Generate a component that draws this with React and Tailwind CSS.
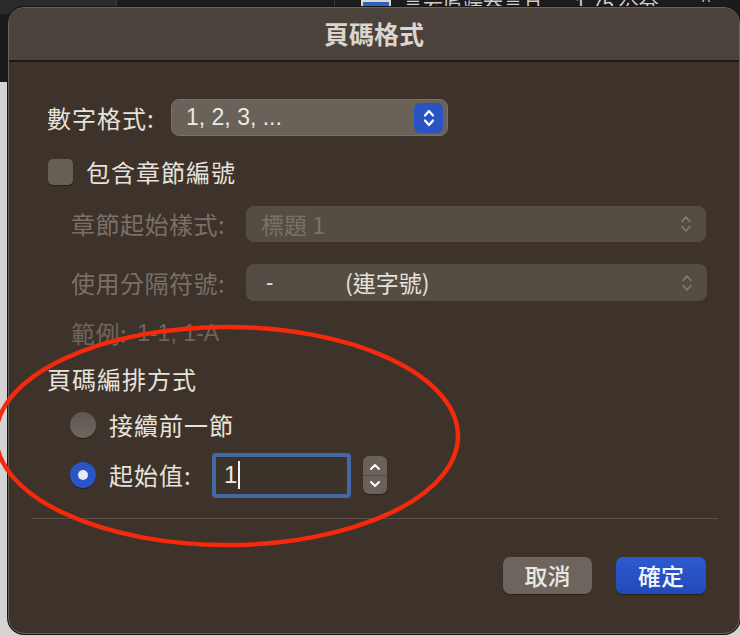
import React from "react";

const cjk = "font-['Noto_Sans_CJK_TC','Noto_Sans_CJK_SC',sans-serif]";

function UpDown({ className = "", color = "#fff", w = 12, h = 20, sw = 2 }) {
    return (
        <svg width={w} height={h} viewBox="0 0 12 20" className={className} fill="none">
            <path d="M2 7.5 L6 3 L10 7.5" stroke={color} strokeWidth={sw} strokeLinecap="round" strokeLinejoin="round" />
            <path d="M2 12.5 L6 17 L10 12.5" stroke={color} strokeWidth={sw} strokeLinecap="round" strokeLinejoin="round" />
        </svg>
    );
}

function Backdrop() {
    return (
        <div className="h-[82px] bg-[#1b1b1b] flex relative">
            <div className="w-[117px] h-[14px] bg-[#2a2a2a] border-r border-[#3a3a3a]" />
            <div className="w-[218px] border-r border-[#3a3a3a]" />
            <div className="flex items-start gap-[12px] pl-[26px] -mt-[8px]">
                <div className="w-[30px] h-[14px] mt-[8px] bg-[#2d63b8] border-2 border-[#d8d8d8]" />
                <span className={`${cjk} text-[20px] text-[#cfcfcf] leading-none mt-[2px]`}>言云庐端吞言且</span>
                <span className="font-['Liberation_Sans',sans-serif] text-[20px] text-[#cfcfcf] leading-none mt-[2px] ml-[20px]">1.75 公分</span>
                <span className="text-[16px] text-[#cfcfcf] leading-none ml-[30px]">^</span>
            </div>
        </div>
    );
}

function Popup({ children, disabled, className = "" }) {
    return (
        <div
            className={`flex items-center rounded-[8px] ${
                disabled ? "bg-[#554c44]" : "bg-[#6a6259] border border-[#7a726a]"
            } ${className}`}
        >
            {children}
        </div>
    );
}

function Radio({ checked }) {
    return checked ? (
        <div className="w-[26px] h-[26px] rounded-full bg-[#2b55c6] flex items-center justify-center shadow-[0_1px_1px_rgba(0,0,0,0.4)]">
            <div className="w-[10px] h-[10px] rounded-full bg-[#e6ebf7]" />
        </div>
    ) : (
        <div className="w-[26px] h-[26px] rounded-full bg-gradient-to-b from-[#5f5750] to-[#6e665e] shadow-[0_1px_1px_rgba(0,0,0,0.4)]" />
    );
}

export default function App() {
    return (
        <div className="relative w-[740px] h-[636px] overflow-hidden bg-[#d4d4d4]">
            <Backdrop />

            {/* Dialog window */}
            <div className={`absolute left-[8px] top-[7px] w-[732px] h-[627px] rounded-[16px] overflow-hidden border border-[#6a625b] shadow-[0_0_0_1px_#1a1612] bg-[#3d332a] flex flex-col ${cjk}`}>
                {/* Title bar */}
                <div className="h-[54px] shrink-0 bg-[#4a423b] border-b-2 border-[#1e1914] flex items-center justify-center">
                    <span className="text-[25px] font-bold text-[#dcd5ce] leading-none -mt-[1px]">頁碼格式</span>
                </div>

                <div className="flex flex-col pl-[38px] pr-[28px] text-[#e7e2dc]">
                    {/* Number format */}
                    <div className="h-[37px] mt-[37px] flex items-center">
                        <span className="text-[24px] leading-none w-[124px] tracking-[1px]">數字格式:</span>
                        <Popup className="w-[277px] h-[37px] pl-[14px] pr-[4px]">
                            <span className="font-['Liberation_Sans',sans-serif] text-[23px] leading-none text-[#ece8e3] flex-1">1, 2, 3, ...</span>
                            <div className="w-[29px] h-[30px] rounded-[6px] bg-[#2a54c4] flex items-center justify-center">
                                <UpDown w={12} h={20} sw={2.2} />
                            </div>
                        </Popup>
                    </div>

                    {/* Include chapter number */}
                    <div className="h-[26px] mt-[23px] flex items-center">
                        <div className="w-[25px] h-[26px] ml-[1px] rounded-[5px] bg-[#675e56] shadow-[0_1px_1px_rgba(0,0,0,0.4)]" />
                        <span className="text-[24px] leading-none ml-[13px] tracking-[1px]">包含章節編號</span>
                    </div>

                    {/* Chapter starts with style */}
                    <div className="h-[36px] mt-[21px] flex items-center">
                        <span className="text-[24px] leading-none text-[#7a7067] w-[199px] pl-[24px] tracking-[0.5px]">章節起始樣式:</span>
                        <Popup disabled className="w-[460px] h-[36px] pl-[15px] pr-[14px]">
                            <span className="text-[23px] leading-none text-[#7b7168] flex-1">標題 1</span>
                            <UpDown color="#857b72" w={12} h={20} sw={1.6} />
                        </Popup>
                    </div>

                    {/* Separator */}
                    <div className="h-[37px] mt-[22px] flex items-center">
                        <span className="text-[24px] leading-none text-[#7a7067] w-[199px] pl-[24px] tracking-[0.5px]">使用分隔符號:</span>
                        <Popup disabled className="w-[461px] h-[37px] pl-[20px] pr-[14px]">
                            <span className="font-['Liberation_Sans',sans-serif] text-[22px] leading-none text-[#e6e1db] w-[79px]">-</span>
                            <span className="text-[23px] leading-none text-[#e6e1db] flex-1">(連字號)</span>
                            <UpDown color="#857b72" w={12} h={20} sw={1.6} />
                        </Popup>
                    </div>

                    {/* Example */}
                    <div className="h-[30px] mt-[17px] flex items-center pl-[24px]">
                        <span className="text-[24px] leading-none text-[#6e655c] tracking-[0.5px]">範例:</span>
                        <span className="font-['Liberation_Sans',sans-serif] text-[23px] leading-none text-[#6e655c] ml-[10px]">1-1, 1-A</span>
                    </div>

                    {/* Page numbering */}
                    <div className="h-[30px] mt-[16px] flex items-center">
                        <span className="text-[24px] leading-none tracking-[1px]">頁碼編排方式</span>
                    </div>

                    <div className="h-[30px] mt-[16px] flex items-center pl-[23px]">
                        <Radio />
                        <span className="text-[24px] leading-none ml-[13px] tracking-[1px]">接續前一節</span>
                    </div>

                    <div className="h-[46px] mt-[12px] flex items-center pl-[23px]">
                        <Radio checked />
                        <span className="text-[24px] leading-none ml-[13px] w-[103px] tracking-[1px]">起始值:</span>
                        <div className="w-[139px] h-[45px] rounded-[4px] border-[4px] border-[#4467a6] bg-[#3b322a] flex items-center pl-[8px]">
                            <span className="font-['Liberation_Sans',sans-serif] text-[24px] leading-none text-[#ece8e3]">1</span>
                            <div className="w-[2px] h-[28px] bg-[#f2f2f2] ml-[1px]" />
                        </div>
                        <div className="ml-[12px] w-[24px] h-[38px] rounded-[6px] bg-[#6a6259] flex flex-col items-center justify-center shadow-[0_1px_1px_rgba(0,0,0,0.4)]">
                            <svg width="12" height="10" viewBox="0 0 12 10" fill="none">
                                <path d="M2 7 L6 3 L10 7" stroke="#fff" strokeWidth="2" strokeLinecap="round" strokeLinejoin="round" />
                            </svg>
                            <div className="w-[24px] h-[1px] bg-[#554d46] my-[3px]" />
                            <svg width="12" height="10" viewBox="0 0 12 10" fill="none">
                                <path d="M2 3 L6 7 L10 3" stroke="#fff" strokeWidth="2" strokeLinecap="round" strokeLinejoin="round" />
                            </svg>
                        </div>
                    </div>
                </div>

                {/* Divider */}
                <div className="h-[1px] bg-[#5a5048] mt-[20px] ml-[23px] mr-[21px]" />

                {/* Buttons */}
                <div className="flex justify-end gap-[24px] mt-[38px] pr-[33px]">
                    <button className="w-[89px] h-[37px] rounded-[7px] bg-[#6d655d] text-[23px] font-medium text-[#ebe7e2] leading-none shadow-[0_1px_1px_rgba(0,0,0,0.4)]">
                        取消
                    </button>
                    <button className="w-[90px] h-[37px] rounded-[7px] bg-gradient-to-b from-[#2c5ad0] to-[#2349b8] text-[23px] font-medium text-[#f3f5fb] leading-none shadow-[0_1px_1px_rgba(0,0,0,0.4)]">
                        確定
                    </button>
                </div>
            </div>

            {/* Red annotation ellipse */}
            <svg className="absolute inset-0 pointer-events-none" width="740" height="636" viewBox="0 0 740 636">
                <ellipse cx="227" cy="436" rx="231" ry="109" fill="none" stroke="#f5290b" strokeWidth="4.5" />
            </svg>
        </div>
    );
}
